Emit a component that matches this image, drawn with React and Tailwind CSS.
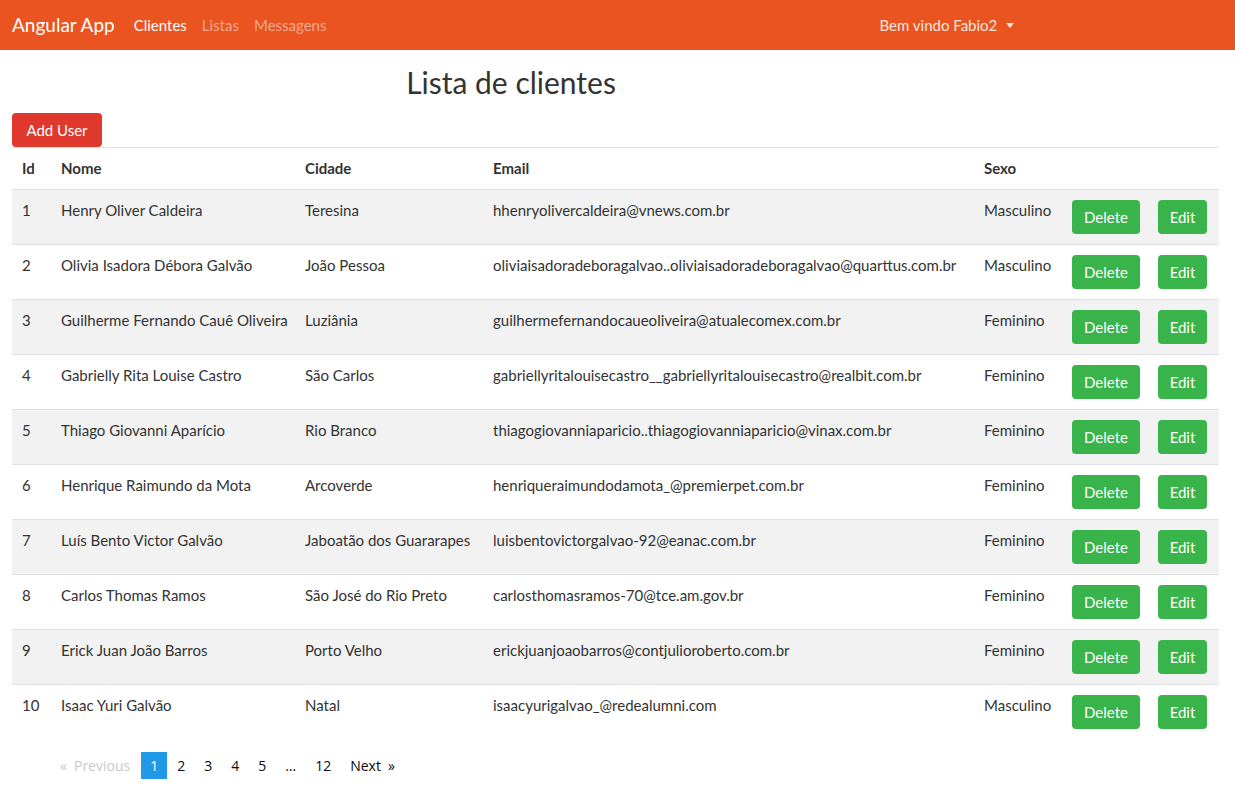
const clientes = [
  { id: 1, nome: 'Henry Oliver Caldeira', cidade: 'Teresina', email: 'hhenryolivercaldeira@vnews.com.br', sexo: 'Masculino' },
  { id: 2, nome: 'Olivia Isadora Débora Galvão', cidade: 'João Pessoa', email: 'oliviaisadoradeboragalvao..oliviaisadoradeboragalvao@quarttus.com.br', sexo: 'Masculino' },
  { id: 3, nome: 'Guilherme Fernando Cauê Oliveira', cidade: 'Luziânia', email: 'guilhermefernandocaueoliveira@atualecomex.com.br', sexo: 'Feminino' },
  { id: 4, nome: 'Gabrielly Rita Louise Castro', cidade: 'São Carlos', email: 'gabriellyritalouisecastro__gabriellyritalouisecastro@realbit.com.br', sexo: 'Feminino' },
  { id: 5, nome: 'Thiago Giovanni Aparício', cidade: 'Rio Branco', email: 'thiagogiovanniaparicio..thiagogiovanniaparicio@vinax.com.br', sexo: 'Feminino' },
  { id: 6, nome: 'Henrique Raimundo da Mota', cidade: 'Arcoverde', email: 'henriqueraimundodamota_@premierpet.com.br', sexo: 'Feminino' },
  { id: 7, nome: 'Luís Bento Victor Galvão', cidade: 'Jaboatão dos Guararapes', email: 'luisbentovictorgalvao-92@eanac.com.br', sexo: 'Feminino' },
  { id: 8, nome: 'Carlos Thomas Ramos', cidade: 'São José do Rio Preto', email: 'carlosthomasramos-70@tce.am.gov.br', sexo: 'Feminino' },
  { id: 9, nome: 'Erick Juan João Barros', cidade: 'Porto Velho', email: 'erickjuanjoaobarros@contjulioroberto.com.br', sexo: 'Feminino' },
  { id: 10, nome: 'Isaac Yuri Galvão', cidade: 'Natal', email: 'isaacyurigalvao_@redealumni.com', sexo: 'Masculino' },
]

function Navbar() {
  return (
    <nav className="h-[50px] bg-[#E95420] flex items-center px-3 text-[15px]">
      <span className="text-white text-[19px] mr-[19px]">Angular App</span>
      <div className="flex gap-[15px]">
        <a className="text-white">Clientes</a>
        <a className="text-[#F4A990]">Listas</a>
        <a className="text-[#F4A990]">Messagens</a>
      </div>
      <div className="ml-[553px] flex items-center text-[#FCE6DE]">
        Bem vindo Fabio2
        {/* caret */}
        <span className="ml-[9px] w-0 h-0 border-l-[4px] border-r-[4px] border-t-[5px] border-l-transparent border-r-transparent border-t-[#FCE6DE]" />
      </div>
    </nav>
  )
}

function Pagination() {
  const pages = ['1', '2', '3', '4', '5', '…', '12']
  return (
    <ul className="flex items-center pl-[38px] mt-[13px] text-[14px] text-[#0a0a0a] font-['Open_Sans',sans-serif]">
      <li className="px-[10px] py-[3px] mr-px text-[#cacaca]">
        <span className="mr-[7px]">«</span>Previous
      </li>
      {pages.map((p) => (
        <li
          key={p}
          className={p === '1' ? 'px-[9px] py-[3px] mr-px bg-[#2199e8] text-white' : 'px-[9px] py-[3px] mr-px'}
        >
          {p}
        </li>
      ))}
      <li className="px-[9px] py-[3px] mr-px">
        Next<span className="ml-[7px]">»</span>
      </li>
    </ul>
  )
}

export default function App() {
  return (
    <div className="min-h-screen bg-white font-['Lato',sans-serif] text-[#333]">
      <Navbar />

      <main className="px-3">
        <h2 className="w-[998px] text-center text-[30px] leading-[38px] mt-[13px]">Lista de clientes</h2>

        <button className="mt-[12px] h-[34px] w-[90px] rounded bg-[#DF382C] text-white text-[15px]">Add User</button>

        <table className="table-fixed w-[1207px] border-collapse text-[15px]">
          <colgroup>
            <col className="w-[39px]" />
            <col className="w-[244px]" />
            <col className="w-[188px]" />
            <col className="w-[491px]" />
            <col className="w-[88px]" />
            <col className="w-[86px]" />
            <col className="w-[71px]" />
          </colgroup>
          <thead>
            <tr className="border-t border-[#dee2e6] text-left">
              <th className="p-[10px] leading-[21px] font-bold">Id</th>
              <th className="p-[10px] leading-[21px] font-bold">Nome</th>
              <th className="p-[10px] leading-[21px] font-bold">Cidade</th>
              <th className="p-[10px] leading-[21px] font-bold">Email</th>
              <th className="p-[10px] leading-[21px] font-bold">Sexo</th>
              <th className="p-[10px]" />
              <th className="p-[10px]" />
            </tr>
          </thead>
          <tbody>
            {clientes.map((c, i) => (
              <tr key={c.id} className={i % 2 === 0 ? 'bg-[#f2f2f2] border-t border-[#dee2e6]' : 'border-t border-[#dee2e6]'}>
                <td className="p-[10px] align-top leading-[20px]">{c.id}</td>
                <td className="p-[10px] align-top leading-[20px] whitespace-nowrap">{c.nome}</td>
                <td className="p-[10px] align-top leading-[20px] whitespace-nowrap">{c.cidade}</td>
                <td className="p-[10px] align-top leading-[20px] whitespace-nowrap">{c.email}</td>
                <td className="p-[10px] align-top leading-[20px]">{c.sexo}</td>
                <td className="py-[10px] px-[10px] align-top">
                  <button className="h-[34px] w-[68px] rounded bg-[#38B44A] text-white text-[15px]">Delete</button>
                </td>
                <td className="py-[10px] px-[10px] align-top">
                  <button className="h-[34px] w-[49px] rounded bg-[#38B44A] text-white text-[15px]">Edit</button>
                </td>
              </tr>
            ))}
          </tbody>
        </table>

        <Pagination />
      </main>
    </div>
  )
}
